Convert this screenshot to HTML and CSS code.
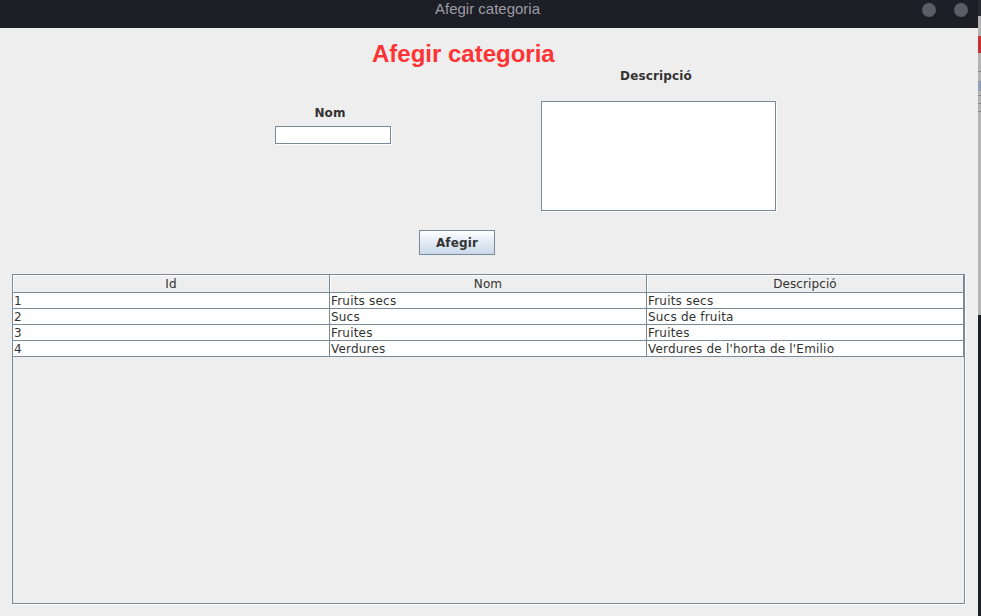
FILE: index.html
```html
<!DOCTYPE html>
<html>
<head>
<meta charset="utf-8">
<title>Afegir categoria</title>
<link rel="stylesheet" href="styles.css">
</head>
<body>
<div class="screen">
  <div class="window">
    <div class="titlebar">
      <span class="title">Afegir categoria</span>
      <span class="dots"><span class="dot"></span><span class="dot"></span></span>
    </div>
    <div class="content">
      <h1 class="heading">Afegir categoria</h1>
      <div class="form-row">
        <div class="col-nom">
          <div class="label">Nom</div>
          <div class="textfield"></div>
        </div>
        <div class="col-desc">
          <div class="label">Descripció</div>
          <div class="textarea"></div>
        </div>
      </div>
      <div class="button-row">
        <button class="btn">Afegir</button>
      </div>
      <div class="scrollpane">
        <div class="trow thead">
          <div class="cell">Id</div>
          <div class="cell">Nom</div>
          <div class="cell">Descripció</div>
        </div>
        <div class="trow">
          <div class="cell">1</div>
          <div class="cell">Fruits secs</div>
          <div class="cell">Fruits secs</div>
        </div>
        <div class="trow">
          <div class="cell">2</div>
          <div class="cell">Sucs</div>
          <div class="cell">Sucs de fruita</div>
        </div>
        <div class="trow">
          <div class="cell">3</div>
          <div class="cell">Fruites</div>
          <div class="cell">Fruites</div>
        </div>
        <div class="trow">
          <div class="cell">4</div>
          <div class="cell">Verdures</div>
          <div class="cell">Verdures de l'horta de l'Emilio</div>
        </div>
      </div>
    </div>
  </div>
  <div class="strip">
    <div class="s-dark-top"></div>
    <div class="s-gray h20"></div>
    <div class="s-red"></div>
    <div class="s-gray h18"></div>
    <div class="s-line"></div>
    <div class="s-gray h9"></div>
    <div class="s-blue"></div>
    <div class="s-gray h4"></div>
    <div class="s-line"></div>
    <div class="s-gray h7"></div>
    <div class="s-line"></div>
    <div class="s-gray h7"></div>
    <div class="s-line"></div>
    <div class="s-gray fill"></div>
    <div class="s-dark"></div>
  </div>
</div>
</body>
</html>
```

FILE: styles.css
```css
html, body {
  margin: 0;
  padding: 0;
  width: 981px;
  height: 616px;
  overflow: hidden;
  background: #1e1e26;
}

.screen {
  display: flex;
  width: 981px;
  height: 616px;
}

.window {
  width: 978px;
  height: 616px;
  display: flex;
  flex-direction: column;
  background: #eeeeee;
}

.titlebar {
  height: 28px;
  flex: none;
  background: #1e1e26;
  position: relative;
  display: flex;
  justify-content: center;
}

.title {
  font-family: "Liberation Sans", Arial, sans-serif;
  font-size: 15px;
  line-height: 17px;
  color: #9c9ca4;
  margin-left: -3px;
}

.dots {
  position: absolute;
  right: 10px;
  top: 3px;
  display: flex;
  gap: 18px;
}

.dot {
  width: 14px;
  height: 14px;
  border-radius: 50%;
  background: #5c5c66;
}

.content {
  flex: 1;
  display: flex;
  flex-direction: column;
  font-family: "DejaVu Sans", sans-serif;
  font-size: 12px;
  color: #333333;
}

.heading {
  margin: 12px 0 0 0;
  padding-left: 372px;
  font-family: "Liberation Sans", Arial, sans-serif;
  font-weight: bold;
  font-size: 24px;
  line-height: 28px;
  color: #ff3333;
}

.form-row {
  display: flex;
  height: 143px;
}

.label {
  font-weight: bold;
  font-size: 12px;
  line-height: 15px;
  text-align: center;
  color: #333333;
  letter-spacing: 0.15px;
}

.col-nom {
  margin-left: 275px;
  width: 116px;
  display: flex;
  flex-direction: column;
}

.col-nom .label {
  margin-top: 38px;
  margin-left: -6px;
}

.textfield {
  margin-top: 5px;
  height: 16px;
  background: #ffffff;
  border: 1px solid #7a8a99;
  box-shadow: 1px 1px 0 #ffffff;
}

.col-desc {
  margin-left: 150px;
  width: 235px;
  display: flex;
  flex-direction: column;
}

.col-desc .label {
  margin-left: -5px;
  margin-top: 1px;
}

.textarea {
  margin-top: 17px;
  height: 108px;
  background: #ffffff;
  border: 1px solid #7a8a99;
  box-shadow: 1px 1px 0 #ffffff;
}

.button-row {
  margin-top: 19px;
  padding-left: 419px;
  display: flex;
}

.btn {
  width: 76px;
  height: 25px;
  margin: 0;
  padding: 1px 0 0 0;
  border: 1px solid #7a8a99;
  background: linear-gradient(to bottom, #ffffff 0%, #e9f0f8 35%, #c9d9ea 100%);
  font-family: "DejaVu Sans", sans-serif;
  font-weight: bold;
  font-size: 12px;
  color: #333333;
  line-height: 22px;
  letter-spacing: 0.15px;
}

.scrollpane {
  margin-top: 19px;
  margin-left: 12px;
  width: 951px;
  height: 328px;
  border: 1px solid #7a8a99;
  box-shadow: 1px 1px 0 #ffffff;
  display: flex;
  flex-direction: column;
}

.trow {
  display: flex;
  height: 15px;
  border-bottom: 1px solid #7a8a99;
  background: #ffffff;
}

.trow.thead {
  height: 17px;
  background: #eeeeee;
}

.cell {
  box-sizing: border-box;
  width: 317px;
  flex: none;
  border-right: 1px solid #7a8a99;
  font-size: 12px;
  line-height: 14px;
  padding: 1px 0 0 1px;
  white-space: nowrap;
  overflow: hidden;
  color: #333333;
  letter-spacing: 0.2px;
}

.thead .cell {
  line-height: 16px;
  text-align: center;
  padding: 1px 0 0 0;
  box-shadow: inset 1px 1px 0 #ffffff;
  letter-spacing: 0.1px;
}

.strip {
  width: 3px;
  height: 616px;
  display: flex;
  flex-direction: column;
}

.s-dark-top { height: 16px; background: #2a2a33; }
.s-gray { background: #b4b4b4; }
.h20 { height: 20px; }
.h18 { height: 18px; }
.h9 { height: 9px; }
.h7 { height: 7px; }
.h4 { height: 4px; }
.s-red { height: 17px; background: #c23434; }
.s-line { height: 1px; background: #888888; }
.s-blue { height: 10px; background: #8ea0b6; }
.fill { height: 203px; }
.s-dark { flex: 1; background: #1e1e26; }
```
